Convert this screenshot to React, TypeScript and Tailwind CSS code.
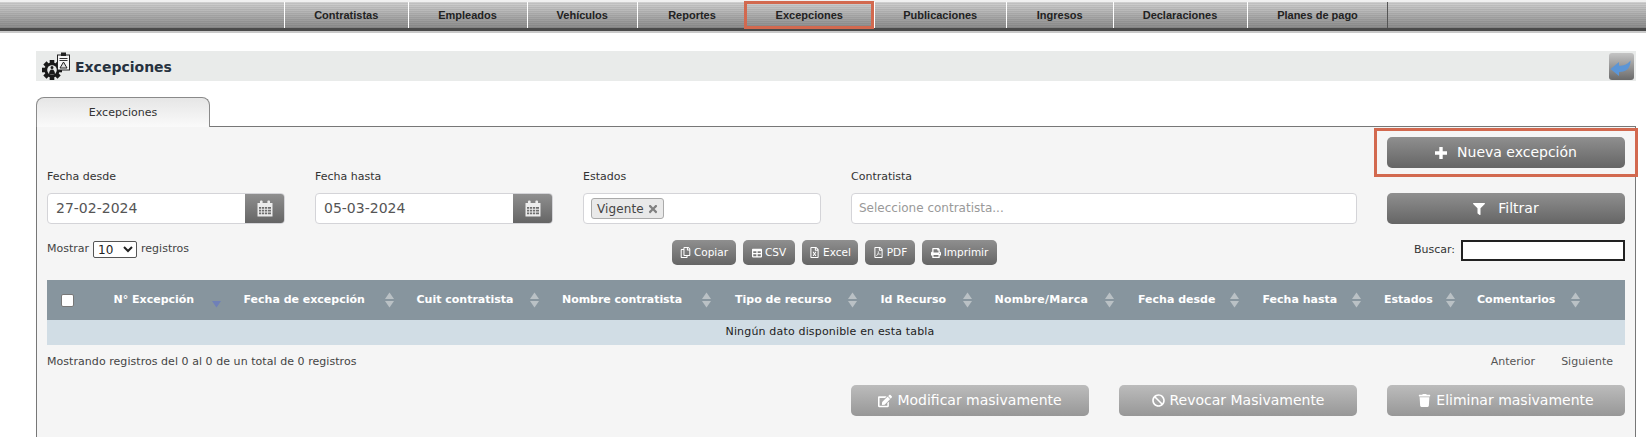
import React from "react";
import { FaFilter, FaTimes, FaRegCopy, FaTable, FaRegFileExcel, FaRegFilePdf, FaPrint, FaEdit, FaBan, FaTrash } from "react-icons/fa";

const navItems = [
  { label: "Contratistas", w: "w-[123.5px]" },
  { label: "Empleados", w: "w-[119px]" },
  { label: "Vehículos", w: "w-[110.5px]" },
  { label: "Reportes", w: "w-[107px] pl-[2px]" },
  { label: "Excepciones", w: "w-[129.5px]", active: true },
  { label: "Publicaciones", w: "w-[132.5px]" },
  { label: "Ingresos", w: "w-[106.5px]" },
  { label: "Declaraciones", w: "w-[134px]" },
  { label: "Planes de pago", w: "w-[140px] pl-[1px]" },
];

const columns = [
  { label: "N° Excepción", col: "w-[130px]", gap: "w-[98px]", active: true },
  { label: "Fecha de excepción", col: "w-[173px]", gap: "w-[141px]" },
  { label: "Cuit contratista", col: "w-[146.5px]", gap: "w-[113px]" },
  { label: "Nombre contratista", col: "w-[172px]", gap: "w-[139.5px]", track: "tracking-[-0.05px] -ml-[1px]" },
  { label: "Tipo de recurso", col: "w-[145.5px]", gap: "w-[112.5px]" },
  { label: "Id Recurso", col: "w-[114px]", gap: "w-[82px]" },
  { label: "Nombre/Marca", col: "w-[143.5px]", gap: "w-[110px]", track: "tracking-[0.25px]" },
  { label: "Fecha desde", col: "w-[124.5px]", gap: "w-[91.5px]" },
  { label: "Fecha hasta", col: "w-[121.5px]", gap: "w-[89px]" },
  { label: "Estados", col: "w-[93px]", gap: "w-[61.5px]" },
  { label: "Comentarios", col: "w-[148px]", gap: "w-[94px]" },
];

const btn = "rounded-[5px] bg-[linear-gradient(#8f8f8f,#656565)] text-white flex items-center justify-center";
const btnOff = "rounded-[5px] bg-[linear-gradient(#bcbcbc,#979797)] text-white flex items-center justify-center h-[31px] w-[238px] text-[14px] gap-[5px]";

function CalendarIcon() {
  return (
    <svg width="16" height="17" viewBox="0 0 16 17" fill="#ececec">
      <path d="M0.500 3h15v13.500H0.500z" />
      <rect x="3" y="0.500" width="2.600" height="4.500" rx="1" />
      <rect x="10.400" y="0.500" width="2.600" height="4.500" rx="1" />
      <path fill="#6e6e6e" d="M2 7h2.200v1.800H2zM5 7h2.200v1.800H5zM8 7h2.200v1.800H8zM11 7h3v1.800h-3zM2 9.700h2.200v1.800H2zM5 9.700h2.200v1.800H5zM8 9.700h2.200v1.800H8zM11 9.700h3v1.800h-3zM2 12.400h2.200v1.800H2zM5 12.400h2.200v1.800H5zM8 12.400h2.200v1.800H8zM11 12.400h3v1.800h-3z" />
    </svg>
  );
}

function PlusIcon() {
  return (
    <svg width="12" height="12" viewBox="0 0 12 12" className="shrink-0">
      <path d="M6 0.500v11M0.500 6h11" stroke="#fff" strokeWidth="3.400" strokeLinecap="round" />
    </svg>
  );
}

function SortIcon({ active }: { active?: boolean }) {
  return (
    <svg width="9" height="16" viewBox="0 0 9 16" className="shrink-0">
      {!active && <path d="M4.500 0.500 9 7H0z" fill="#bac1c5" />}
      <path d="M0 9h9l-4.500 6.500z" fill={active ? "#6f80b8" : "#bac1c5"} />
    </svg>
  );
}

function PageIcon() {
  const teeth = [0, 45, 90, 135, 180, 225, 270, 315];
  return (
    <svg width="29" height="28" viewBox="0 0 29 28" className="shrink-0 self-end mb-[1px]">
      <g fill="#1a1a1a">
        <circle cx="10" cy="18" r="7.500" />
        {teeth.map((a) => (
          <rect key={a} x="7.700" y="8" width="4.600" height="4" transform={`rotate(${a} 10 18)`} />
        ))}
      </g>
      <circle cx="10" cy="18" r="4.800" fill="#e9ebea" />
      <path d="M7 22.500c0-3 1-5 3-5s3 2 3 5zM8.500 15.500a1.500 1.500 0 1 0 3 0 1.500 1.500 0 1 0-3 0" fill="#1a1a1a" />
      <rect x="15.500" y="3" width="12" height="15" fill="#f5f5f5" stroke="#222" strokeWidth="1" />
      <rect x="19" y="0.500" width="5" height="3.500" fill="#222" />
      <path d="M17.500 6.500h8M17.500 8.500h8" stroke="#333" strokeWidth="1" />
      <path d="M21.500 10 25 16h-7z" fill="#ddd" stroke="#222" strokeWidth="1" />
    </svg>
  );
}

function BackIcon() {
  return (
    <svg width="25" height="27" viewBox="0 0 25 27" className="shrink-0">
      <defs>
        <linearGradient id="bk" x1="0" y1="0" x2="0" y2="1">
          <stop offset="0" stopColor="#c4c4c4" />
          <stop offset="1" stopColor="#6a6a6a" />
        </linearGradient>
      </defs>
      <rect width="25" height="27" rx="3" fill="url(#bk)" />
      <path d="M1.500 16 10 9v3.800c4.500 0 8-1 11.500-5.300 0 7-3.500 11.500-11.500 11.500v4z" fill="#5b95d6" />
    </svg>
  );
}

function Label({ children }: { children: React.ReactNode }) {
  return <div className="text-[11px] leading-[17px] h-[17px] text-[#333]">{children}</div>;
}

function DateField({ label, value }: { label: string; value: string }) {
  return (
    <div className="w-[238px]">
      <Label>{label}</Label>
      <div className="mt-[8px] h-[31px] flex rounded-[4px] border border-[#d4d4d8] bg-white overflow-hidden">
        <div className="flex-1 pl-[8px] text-[14px] leading-[29px] text-[#555]">{value}</div>
        <div className="w-[39px] bg-[linear-gradient(#8f8f8f,#656565)] flex items-center justify-center">
          <CalendarIcon />
        </div>
      </div>
    </div>
  );
}

export default function App() {
  return (
    <div className="w-[1646px] h-[437px] overflow-hidden bg-white font-['DejaVu_Sans',Verdana,sans-serif] text-[#333]">
      <nav className="h-[33px] border-b-[2px] border-[#c9c9c9]">
        <div className="h-[31px] border-b-[3px] border-[#4a4a4a] border-t-[2px] border-t-[#f0f0f0] bg-[repeating-linear-gradient(#0000_0,#0000_1px,#00000010_1px,#00000010_2px),linear-gradient(#d0d0d0,#8b8b8b)] flex pl-[284px]">
          {navItems.map((n) => (
            <div
              key={n.label}
              className={`relative ${n.w} border-l border-white flex items-center justify-center font-['Liberation_Sans',Arial,sans-serif] font-bold text-[11px] text-[#222]`}
            >
              {n.label}
              {n.active && (
                <div className="absolute -left-px -top-[1px] -bottom-[1px] right-0 border-[3px] border-[#d2694f]" />
              )}
            </div>
          ))}
          <div className="border-l border-[#555]" />
        </div>
      </nav>

      <div className="ml-[36px] w-[1600px] mt-[18px] h-[30px] bg-[#e9ebea] flex items-center pl-[6px] pr-[2px]">
        <PageIcon />
        <h1 className="ml-[4px] pt-[2px] flex-1 text-[14px] font-bold text-[#27323f]">Excepciones</h1>
        <BackIcon />
      </div>

      <div className="ml-[36px] w-[1600px] mt-[16px]">
        <div className="relative z-10 w-[174px] h-[30px] pt-[1px] rounded-t-[8px] border border-b-0 border-[#8a8a8a] bg-[linear-gradient(#e6e6e6,#fafafa)] flex items-center justify-center text-[11px] text-[#333]">
          Excepciones
        </div>
        <div className="-mt-px h-[311px] border-l border-r border-t border-[#777] bg-[#f5f5f5] px-[10px] pt-[10px]">
          <div className="flex justify-end">
            <div className="relative">
              <button className={`${btn} w-[238px] h-[31px] text-[14px] gap-[10px]`}>
                <PlusIcon />
                <span>Nueva excepción</span>
              </button>
              <div className="absolute -left-[13px] -right-[13px] -top-[9px] -bottom-[9px] border-[3px] border-[#d2694f]" />
            </div>
          </div>

          <div className="mt-0 flex gap-[30px] items-end">
            <DateField label="Fecha desde" value="27-02-2024" />
            <DateField label="Fecha hasta" value="05-03-2024" />
            <div className="w-[238px]">
              <Label>Estados</Label>
              <div className="mt-[8px] h-[31px] rounded-[4px] border border-[#d4d4d8] bg-white flex items-center pl-[7px]">
                <span className="h-[21px] w-[73px] flex items-center justify-between pl-[5px] pr-[4px] rounded-[3px] border border-[#aaa] bg-[#e9e9e9] text-[12px] tracking-[0.1px] text-[#444]">
                  Vigente
                  <FaTimes className="text-[12px] text-[#808080]" />
                </span>
              </div>
            </div>
            <div className="w-[506px]">
              <Label>Contratista</Label>
              <div className="mt-[8px] h-[31px] rounded-[4px] border border-[#d4d4d8] bg-white pl-[7px] text-[12px] leading-[29px] text-[#999]">
                Seleccione contratista...
              </div>
            </div>
            <button className={`${btn} w-[238px] h-[31px] text-[14px] gap-[13px]`}>
              <FaFilter className="text-[12px]" />
              <span>Filtrar</span>
            </button>
          </div>

          <div className="mt-[16px] h-[25px] flex items-start relative">
            <div className="w-[625px] flex items-center h-[17px] mt-[1px] text-[11px] gap-[4px] text-[#444]">
              Mostrar
              <select className="w-[44px] h-[17px] text-[12px] border border-[#555] rounded-[2px] bg-white text-[#222] font-['DejaVu_Sans',sans-serif]">
                <option>10</option>
              </select>
              registros
            </div>
            <div className="flex gap-[7px] text-[10.5px]">
              <button className={`${btn} h-[25px] w-[64px] gap-[3px]`}><FaRegCopy className="text-[11px]" />Copiar</button>
              <button className={`${btn} h-[25px] w-[52px] gap-[3px]`}><FaTable className="text-[10px]" />CSV</button>
              <button className={`${btn} h-[25px] w-[56px] gap-[3px]`}><FaRegFileExcel className="text-[11px]" />Excel</button>
              <button className={`${btn} h-[25px] w-[50px] gap-[3px]`}><FaRegFilePdf className="text-[11px]" />PDF</button>
              <button className={`${btn} h-[25px] w-[75px] gap-[3px]`}><FaPrint className="text-[10px]" />Imprimir</button>
            </div>
            <div className="ml-auto flex items-center gap-[6px] text-[11px] text-[#333]">
              Buscar:
              <div className="w-[164px] h-[21px] border-[2px] border-[#222] bg-white" />
            </div>
          </div>

          <table className="mt-[15px] w-full table-fixed border-collapse">
            <colgroup>
              <col className="w-[66.5px]" />
              {columns.map((c) => (
                <col key={c.label} className={c.col} />
              ))}
            </colgroup>
            <thead>
              <tr className="h-[40px] bg-[#87959e] text-white text-[11px] font-bold">
                <th className="pl-[14px] text-left p-0">
                  <span className="block w-[13px] h-[13px] rounded-[2px] bg-white border border-[#777]" />
                </th>
                {columns.map((c) => (
                  <th key={c.label} className="text-left p-0 font-bold">
                    <div className="flex items-center">
                      <span className={`${c.gap} ${c.track ?? ""} whitespace-nowrap`}>{c.label}</span>
                      <SortIcon active={c.active} />
                    </div>
                  </th>
                ))}
              </tr>
            </thead>
            <tbody>
              <tr className="h-[25px] bg-[#d1dde5]">
                <td colSpan={12} className="text-center text-[11px] tracking-[0.17px] text-[#222] p-0 pr-[12px]">
                  Ningún dato disponible en esta tabla
                </td>
              </tr>
            </tbody>
          </table>

          <div className="mt-[9px] h-[17px] flex items-center text-[11px] text-[#444]">
            <span className="flex-1 tracking-[0.05px]">Mostrando registros del 0 al 0 de un total de 0 registros</span>
            <span className="text-[#555]">Anterior</span>
            <span className="ml-[26px] mr-[12px] text-[#555]">Siguiente</span>
          </div>

          <div className="mt-[14px] flex justify-end gap-[30px]">
            <button className={btnOff}><FaEdit className="text-[14px]" />Modificar masivamente</button>
            <button className={btnOff}><FaBan className="text-[13px]" />Revocar Masivamente</button>
            <button className={btnOff}><FaTrash className="text-[13px]" />Eliminar masivamente</button>
          </div>
        </div>
      </div>
    </div>
  );
}
